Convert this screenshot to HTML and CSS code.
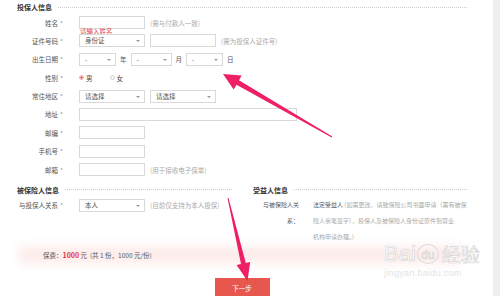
FILE: index.html
```html
<!DOCTYPE html>
<html lang="zh-CN">
  <head>
    <meta charset="UTF-8" />
    <meta name="viewport" content="width=device-width, initial-scale=1.0" />
    <title>投保信息</title>
    <link rel="stylesheet" href="styles.css">
  </head>
  <body>
    <div class="page">
      <div class="main">
        <div class="sec-title">投保人信息</div>
        <div class="form">
          <div class="row">
            <label>姓名<em>*</em></label>
            <div class="field">
              <span class="input"><span class="err">请输入姓名</span></span>
              <span class="hint">(需与付款人一致)</span>
            </div>
          </div>
          <div class="row">
            <label>证件号码<em>*</em></label>
            <div class="field">
              <span class="input select">身份证</span>
              <span class="input"></span>
              <span class="hint">(需为投保人证件号)</span>
            </div>
          </div>
          <div class="row">
            <label>出生日期<em>*</em></label>
            <div class="field date">
              <span class="input select d1">-</span>
              <span>年</span>
              <span class="input select d2">-</span>
              <span>月</span>
              <span class="input select d3">-</span>
              <span>日</span>
            </div>
          </div>
          <div class="row">
            <label>性别<em>*</em></label>
            <div class="field">
              <span class="radio"><i class="dot on"></i>男</span>
              <span class="radio"><i class="dot"></i>女</span>
            </div>
          </div>
          <div class="row">
            <label>常住地区<em>*</em></label>
            <div class="field">
              <span class="input select">请选择</span>
              <span class="input select">请选择</span>
            </div>
          </div>
          <div class="row">
            <label>地址<em>*</em></label>
            <div class="field"><span class="input wide"></span></div>
          </div>
          <div class="row">
            <label>邮编<em>*</em></label>
            <div class="field"><span class="input"></span></div>
          </div>
          <div class="row">
            <label>手机号<em>*</em></label>
            <div class="field"><span class="input"></span></div>
          </div>
          <div class="row">
            <label>邮箱<em>*</em></label>
            <div class="field">
              <span class="input"></span>
              <span class="hint">(用于接收电子保单)</span>
            </div>
          </div>
        </div>

        <div class="cols">
          <div class="col">
            <div class="sec-title">被保险人信息</div>
            <div class="row first">
              <label>与投保人关系<em>*</em></label>
              <div class="field">
                <span class="input select">本人</span>
                <span class="hint">(目前仅支持为本人投保)</span>
              </div>
            </div>
          </div>
          <div class="col">
            <div class="sec-title">受益人信息</div>
            <div class="benef">
              <label>与被保险人关系：</label>
              <p><b>法定受益人</b> (如需更改，请致保险公司书面申请（需有被保<br>险人亲笔签字），投保人及被保险人身份证原件到营业<br>机构申请办理。)</p>
            </div>
          </div>
        </div>

        <div class="premium">
          <span>保费：<strong>1000</strong> 元 &nbsp;(共 1 份，1000 元/份)</span>
        </div>

        <div class="actions"><button class="next">下一步</button></div>
      </div>
      <div class="scroll"></div>

      <div class="watermark">
        <div class="wm-logo"><span>Bai</span><span class="paw">du</span><span class="wm-cn">经验</span></div>
        <div class="wm-url">jingyan.baidu.com</div>
      </div>

      <svg class="arrows" width="500" height="296" viewBox="0 0 500 296">
        <polygon points="223,74 241.7,75.6 239,80.3 332.3,136.6 331.7,137.4 236.5,84.7 233.7,89.4" />
        <polygon points="247.5,281 236.6,265.1 241,264.1 227.5,198.1 228.5,197.9 245.8,262.9 250.2,261.9" />
      </svg>
    </div>
  </body>
</html>
```

FILE: styles.css
```css
* {
  box-sizing: border-box;
}
body {
  margin: 0;
  font-family: "Noto Sans CJK SC", "Noto Sans", sans-serif;
  font-size: 6.5px;
  color: #555;
  background: #fff;
}
.page {
  position: relative;
  display: flex;
  width: 500px;
  height: 296px;
  overflow: hidden;
}
.main {
  flex: 1;
  padding: 2px 26px 0 17px;
}
.scroll {
  width: 7px;
  background: #efefef;
}

/* section titles with dotted rule */
.sec-title {
  display: flex;
  align-items: center;
  gap: 6px;
  height: 10px;
  font-size: 7px;
  font-weight: bold;
  color: #333;
}
.sec-title::after {
  content: "";
  flex: 1;
  border-top: 1px dotted #ccc;
}

/* form rows */
.form {
  display: grid;
  row-gap: 5.4px;
  margin-top: 4px;
}
.row {
  display: grid;
  grid-template-columns: 46px 1fr;
  column-gap: 16px;
  align-items: center;
  height: 13px;
}
.row label {
  text-align: right;
  white-space: nowrap;
}
.row label em {
  font-style: normal;
  color: #999;
  margin-left: 2px;
}
.field {
  display: flex;
  align-items: center;
  gap: 5px;
  height: 13px;
  white-space: nowrap;
}
.field.date {
  gap: 4px;
}
.input {
  position: relative;
  display: block;
  height: 13px;
  width: 66px;
  border: 1px solid #d9d9d9;
  background: #fff;
}
.input.wide {
  width: 218px;
}
.select {
  padding-left: 5px;
  line-height: 11px;
  color: #555;
}
.select::after {
  content: "";
  position: absolute;
  right: 4px;
  top: 5px;
  border: 2px solid transparent;
  border-top-color: #999;
}
.select.d1,
.select.d3 {
  width: 37px;
}
.select.d2 {
  width: 41px;
}
.hint {
  color: #aaa;
}
.err {
  position: absolute;
  left: 0;
  top: 11px;
  color: #e23b3b;
  line-height: 7px;
  white-space: nowrap;
}

/* radios */
.radio {
  display: flex;
  align-items: center;
  gap: 2px;
  margin-right: 12px;
  color: #444;
}
.dot {
  display: block;
  width: 5px;
  height: 5px;
  border: 1px solid #ccc;
  border-radius: 50%;
}
.dot.on {
  border-color: #f3a9a4;
  background: radial-gradient(circle, #e8574d 45%, #fff 55%);
}

/* insured / beneficiary */
.cols {
  display: grid;
  grid-template-columns: 215px 214px;
  column-gap: 21px;
  margin-top: 8.8px;
}
.row.first {
  margin-top: 4px;
}
.benef {
  display: grid;
  grid-template-columns: 39px 1fr;
  column-gap: 14px;
  padding-left: 7px;
  margin-top: 2px;
  font-size: 6px;
  line-height: 16px;
}
.benef label {
  text-align: right;
  color: #555;
}
.benef p {
  margin: 0;
  color: #aaa;
  white-space: nowrap;
}
.benef b {
  font-weight: normal;
  color: #555;
}

/* premium band */
.premium {
  position: relative;
  margin: -3px 0 0 -2px;
  height: 26px;
  display: flex;
  align-items: center;
  padding-left: 28px;
  color: #555;
  white-space: nowrap;
}
.premium::before {
  content: "";
  position: absolute;
  left: 4px;
  right: 4px;
  top: 4px;
  bottom: 4px;
  background: #fcedeb;
  filter: blur(5px);
  z-index: -1;
}
.premium strong {
  color: #e4393c;
  font-size: 7px;
}

.actions {
  display: flex;
  justify-content: center;
  margin-top: 10px;
}
.next {
  width: 55px;
  height: 20px;
  border: none;
  background: #e8574d;
  color: #fff;
  font-family: inherit;
  font-size: 6.5px;
  padding: 0;
}

/* watermark + annotation arrows */
.watermark {
  position: absolute;
  left: 384px;
  top: 241px;
  color: #fff;
  font-family: "Liberation Sans", sans-serif;
}
.wm-logo {
  display: flex;
  align-items: center;
  font-size: 22px;
  line-height: 26px;
  -webkit-text-stroke: 0.7px #d6d6d6;
}
.paw {
  display: inline-block;
  font-size: 12px;
  line-height: 20px;
  width: 22px;
  height: 20px;
  text-align: center;
  border: 1px solid #dcdcdc;
  border-radius: 50%;
  margin: 0 3px 0 1px;
}
.wm-cn {
  font-family: "Noto Sans CJK SC", sans-serif;
  font-size: 19px;
}
.wm-url {
  font-size: 9px;
  color: #e4e4e4;
  letter-spacing: 0.3px;
  margin-top: 1px;
}
.arrows {
  position: absolute;
  left: 0;
  top: 0;
  pointer-events: none;
}
.arrows polygon {
  fill: #ee1f64;
}
```
